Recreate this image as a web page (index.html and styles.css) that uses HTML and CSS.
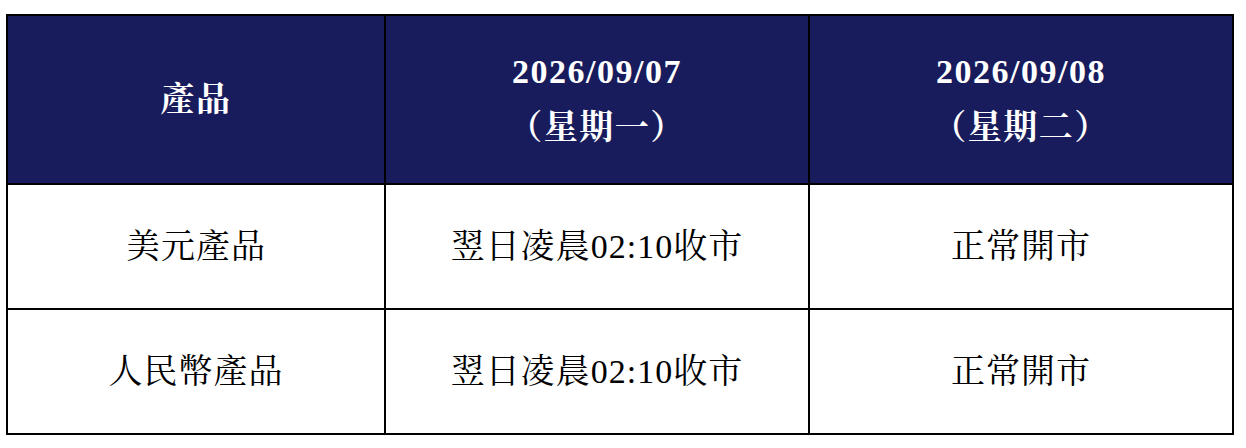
FILE: index.html
```html
<!DOCTYPE html>
<html lang="zh-Hant">
<head>
<meta charset="utf-8">
<title>休市安排</title>
<link rel="stylesheet" href="styles.css">
</head>
<body>
<table class="schedule">
  <colgroup>
    <col class="col-product">
    <col class="col-day">
    <col class="col-day">
  </colgroup>
  <thead>
    <tr>
      <th>產品</th>
      <th>2026/09/07<br>（星期一）</th>
      <th>2026/09/08<br>（星期二）</th>
    </tr>
  </thead>
  <tbody>
    <tr>
      <td>美元產品</td>
      <td>翌日凌晨02:10收市</td>
      <td>正常開市</td>
    </tr>
    <tr>
      <td>人民幣產品</td>
      <td>翌日凌晨02:10收市</td>
      <td>正常開市</td>
    </tr>
  </tbody>
</table>
</body>
</html>
```
FILE: styles.css
```css
html, body {
  margin: 0;
  padding: 0;
  background: #ffffff;
}

body {
  padding: 14px 0 0 6px;
  font-family: "Liberation Serif", "Noto Serif CJK TC", "Noto Sans CJK TC", serif;
}

.schedule {
  width: 1228px;
  border-collapse: collapse;
  table-layout: fixed;
  border: 2px solid #000000;
}

.col-product {
  width: 378px;
}

.col-day {
  width: 424px;
}

.schedule th,
.schedule td {
  border: 2px solid #000000;
  text-align: center;
  vertical-align: middle;
  padding: 0;
  font-size: 34px;
  letter-spacing: 1px;
}

.schedule th {
  height: 167px;
  background: #181c5c;
  color: #ffffff;
  font-weight: bold;
  line-height: 56px;
  letter-spacing: 1.5px;
}

.schedule td {
  height: 123px;
  color: #000000;
  font-weight: normal;
  line-height: 40px;
}
```
